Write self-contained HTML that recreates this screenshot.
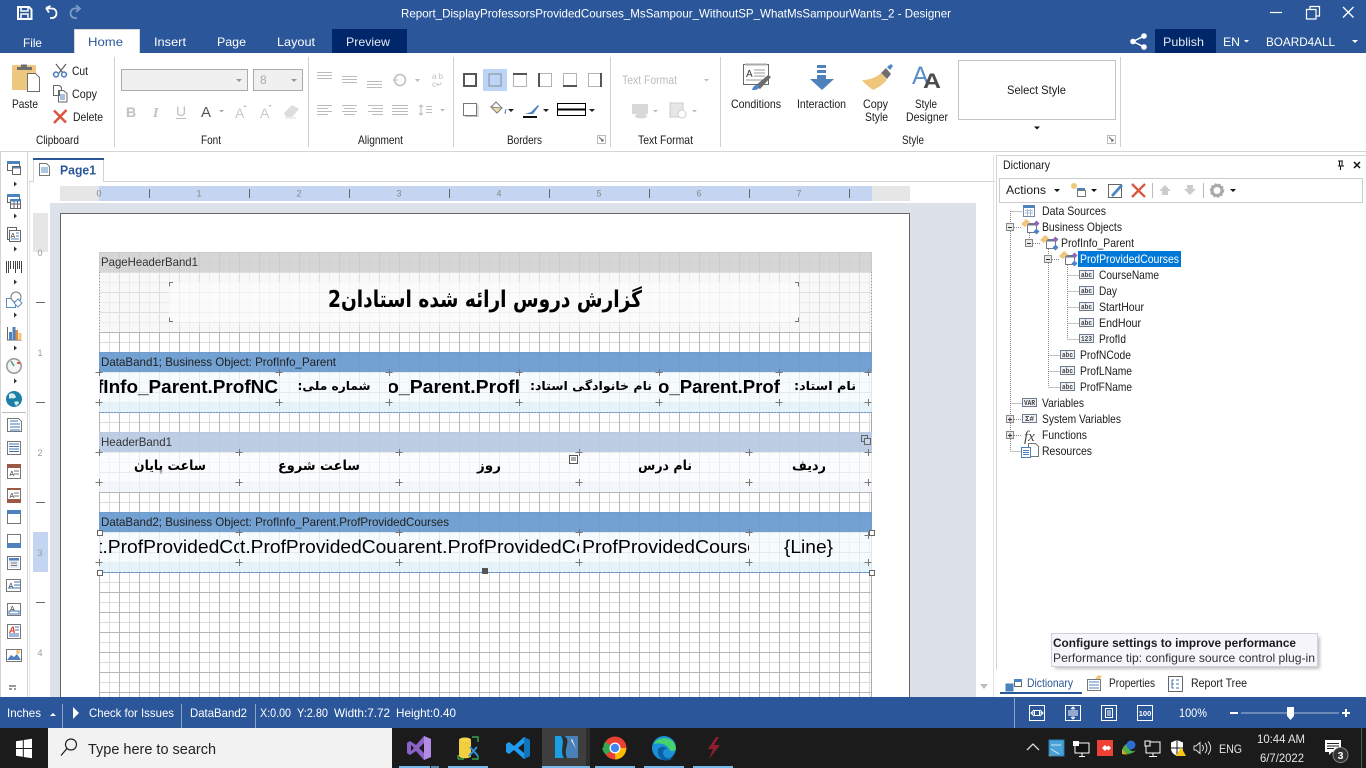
<!DOCTYPE html>
<html lang="en"><head><meta charset="utf-8"><title>Designer</title>
<style>
html,body{margin:0;padding:0;width:1366px;height:768px;overflow:hidden;background:#fff}
svg{display:block;font-family:"Liberation Sans","DejaVu Sans",sans-serif;font-size:12px}
text{white-space:pre}
.k{fill:#222}
.w{fill:#fff}
.g{fill:#b5b5b5}
.ar{font-family:"DejaVu Sans","Liberation Sans",sans-serif;font-weight:bold;fill:#000;direction:rtl;text-anchor:middle}
.t{font-size:12px;fill:#1b1b1b}
.b{font-size:12px;fill:#333}
</style></head><body>
<svg xmlns="http://www.w3.org/2000/svg" width="1366" height="768" viewBox="0 0 1366 768">
<defs>
<pattern id="grid" x="99" y="252" width="20" height="20" patternUnits="userSpaceOnUse">
<rect width="20" height="20" fill="#fff"/>
<rect x="10" width="1" height="20" fill="#dcdcdc"/><rect y="10" width="20" height="1" fill="#dcdcdc"/>
<rect width="1" height="20" fill="#b6b6b6"/><rect width="20" height="1" fill="#b6b6b6"/>
</pattern>
<filter id="soft" x="-10%" y="-30%" width="120%" height="160%"><feGaussianBlur stdDeviation="1.500"/></filter>
<clipPath id="c1"><rect x="100" y="372" width="179" height="30"/></clipPath>
<clipPath id="c2"><rect x="389" y="372" width="131" height="30"/></clipPath>
<clipPath id="c3"><rect x="659" y="372" width="121" height="30"/></clipPath>
<clipPath id="d1"><rect x="100" y="532" width="139" height="30"/></clipPath>
<clipPath id="d2"><rect x="239" y="532" width="160" height="30"/></clipPath>
<clipPath id="d3"><rect x="399" y="532" width="180" height="30"/></clipPath>
<clipPath id="d4"><rect x="579" y="532" width="170" height="30"/></clipPath>
<g id="bo">
<rect x="6.500" y="4.500" width="9" height="9" fill="#fff" stroke="#6d7a8c"/>
<path d="M6 5.500h10" stroke="#6d7a8c" stroke-width="2"/>
<path d="M0 5 5 0l4 3-5 5z" fill="#efc77c"/>
<path d="M12.500 4.500l3-3 3 3-3 3z" fill="#9166b8"/>
<path d="M12.500 12.500l3-3 3 3-3 3z" fill="#4c86c6"/>
</g>
<g id="corner" fill="none" stroke="#777"><path d="M-3.500 .5h7M.5-3v7"/></g>
</defs>

<!-- title bar -->
<rect width="1366" height="53" fill="#2b579a"/>
<g fill="none" stroke="#fff" stroke-width="2">
<path d="M18 7h11l2.500 2.500V19H18z"/><path d="M21 7v4h7V7M21 19v-5h7v5" stroke-width="1.500"/>
<path d="M46 8 49 12.500M46 8l4.500-2M46.500 8.500H52c6 0 6 9.500 0 9.500h-2" stroke-width="1.800"/>
<g stroke="#7e9bc6" stroke-width="1.800"><path d="M80 8.500H75c-6 0-6 9.500 0 9.500h2M76 5.500l4 3-4 3.500"/></g>
<path d="M1270 12.500h12" stroke-width="1.200"/>
<path d="M1306.500 9.500h9.500v9.500h-9.500z" stroke-width="1.200"/>
<path d="M1310 9.500V6.500h9.500V16h-3" stroke-width="1.200"/>
<path d="M1343 7l10.500 10.500M1353.500 7 1343 17.500" stroke-width="1.300"/>
</g>
<text x="401" y="17.500" class="w" textLength="550" lengthAdjust="spacingAndGlyphs">Report_DisplayProfessorsProvidedCourses_MsSampour_WithoutSP_WhatMsSampourWants_2 - Designer</text>

<!-- tabs -->
<rect x="74" y="29" width="66" height="25" fill="#fff"/><path d="M74.500 53V29.500h65V53" fill="none" stroke="#d8d8d8"/>
<rect x="332" y="29" width="75" height="24" fill="#01276b"/>
<rect x="1155" y="29" width="61" height="24" fill="#01276b"/>
<text x="23" y="47" class="w" textLength="19" lengthAdjust="spacingAndGlyphs">File</text>
<text x="88" y="46" fill="#2b579a" textLength="35" lengthAdjust="spacingAndGlyphs">Home</text>
<text x="154" y="46" class="w" textLength="32" lengthAdjust="spacingAndGlyphs">Insert</text>
<text x="217" y="46" class="w" textLength="29" lengthAdjust="spacingAndGlyphs">Page</text>
<text x="277" y="46" class="w" textLength="38" lengthAdjust="spacingAndGlyphs">Layout</text>
<text x="346" y="46" fill="#e4e9f2" textLength="44" lengthAdjust="spacingAndGlyphs">Preview</text>
<text x="1163" y="46" fill="#e4e9f2" textLength="41" lengthAdjust="spacingAndGlyphs">Publish</text>
<text x="1223" y="46" class="w" textLength="17" lengthAdjust="spacingAndGlyphs">EN</text>
<text x="1266" y="46" class="w" textLength="69" lengthAdjust="spacingAndGlyphs">BOARD4ALL</text>
<path d="M1244 40h5l-2.500 2.500zM1352 40h6l-3 3z" fill="#fff"/>
<g fill="#fff"><circle cx="1133" cy="41.500" r="2.800"/><circle cx="1144" cy="36" r="2.800"/><circle cx="1144" cy="47" r="2.800"/><path d="M1133 41.500 1144 36M1133 41.500 1144 47" stroke="#fff" stroke-width="1.500"/></g>

<!-- ribbon -->
<rect y="53" width="1366" height="98" fill="#fff"/>
<rect y="151" width="1366" height="1" fill="#d4d4d4"/>
<g fill="#d0d0d0"><rect x="114" y="57" width="1" height="90"/><rect x="308" y="57" width="1" height="90"/><rect x="453" y="57" width="1" height="90"/><rect x="610" y="57" width="1" height="90"/><rect x="720" y="57" width="1" height="90"/><rect x="1120" y="57" width="1" height="90"/></g>

<!-- clipboard -->
<rect x="12" y="65" width="24" height="25" rx="1" fill="#eec77f"/>
<path d="M17 70v-3h4v-2.500h6V67h5v3z" fill="#6e6e6e"/>
<path d="M27.500 73.500h8l4 4v14h-12z" fill="#fff" stroke="#6e6e6e"/>
<text x="12" y="108" class="t" textLength="26" lengthAdjust="spacingAndGlyphs">Paste</text>
<g fill="none"><path d="M56 64l7 9M66 64l-7 9" stroke="#666" stroke-width="1.300"/><circle cx="56" cy="74.500" r="2.400" stroke="#4c82bd" stroke-width="1.600"/><circle cx="64" cy="74.500" r="2.400" stroke="#4c82bd" stroke-width="1.600"/></g>
<text x="72" y="75" class="t" textLength="16" lengthAdjust="spacingAndGlyphs">Cut</text>
<path d="M53.500 85.500h6l2 2v3h-2l0 5h-6zM58.500 90.500h5l3.500 3v8.500h-8.500z" fill="#fff" stroke="#666"/><path d="M60 95h5M60 97h5M60 99h5" stroke="#4c82bd"/>
<text x="72" y="98" class="t" textLength="25" lengthAdjust="spacingAndGlyphs">Copy</text>
<path d="M54 110.500 66 122.500M66.500 110 54 123" stroke="#d9573f" stroke-width="2.500" fill="none"/>
<text x="73" y="121" class="t" textLength="30" lengthAdjust="spacingAndGlyphs">Delete</text>
<text x="36" y="144" class="t" textLength="43" lengthAdjust="spacingAndGlyphs">Clipboard</text>

<!-- font -->
<rect x="121.500" y="69.500" width="126" height="21" fill="#f0f0f0" stroke="#ababab"/>
<rect x="253.500" y="69.500" width="49" height="21" fill="#f0f0f0" stroke="#ababab"/>
<path d="M236 79h6l-3 3zM291 79h6l-3 3z" fill="#999"/>
<text x="260" y="84" fill="#aaa" font-size="12">8</text>
<text x="126" y="117" font-weight="bold" font-size="14" fill="#c0c0c0">B</text>
<text x="153" y="117" font-style="italic" font-weight="bold" font-family="Liberation Serif" font-size="14" fill="#c0c0c0">I</text>
<text x="176" y="116" font-size="14" fill="#c0c0c0">U</text><rect x="176" y="118" width="10" height="1" fill="#c0c0c0"/>
<text x="201" y="117" font-size="15" fill="#555">A</text><path d="M219 110h5l-2.500 2.500z" fill="#aaa"/>
<text x="235" y="118" font-size="14" fill="#c8c8c8">A</text><path d="M243 107l2-2 2 2z" fill="#c8c8c8"/>
<text x="260" y="118" font-size="14" fill="#c8c8c8">A</text><path d="M268 105h4l-2 2z" fill="#c8c8c8"/>
<path d="M284 113l8-8 7 4-7 8h-6z" fill="#ddd"/><path d="M285 118h11" stroke="#ddd"/>
<text x="201" y="144" class="t" textLength="20" lengthAdjust="spacingAndGlyphs">Font</text>

<!-- alignment -->
<g stroke="#bdbdbd" fill="none">
<path d="M317 72.500h15M317 75.500h15M317 78.500h15"/>
<path d="M342 76.500h15M342 79.500h15M342 82.500h15"/>
<path d="M367 81.500h15M367 84.500h15M367 87.500h15"/>
<circle cx="400" cy="80" r="5.500" stroke-width="1.500"/><path d="M393 80h5"/><path d="M415 79h5l-2.500 3z" fill="#bbb" stroke="none"/>
<path d="M317 105.500h15M317 108.500h11M317 111.500h15M317 114.500h11"/>
<path d="M342 105.500h15M344 108.500h11M342 111.500h15M344 114.500h11"/>
<path d="M368 105.500h15M372 108.500h11M368 111.500h15M372 114.500h11"/>
<path d="M392 105.500h16M392 108.500h16M392 111.500h16M392 114.500h16"/>
<path d="M421 105v10M419 107l2-2 2 2M419 113l2 2 2-2M426 106.500h6M426 109.500h6M426 112.500h6"/>
</g>
<path d="M440 109h5l-2.500 2.500z" fill="#bbb"/>
<text x="432" y="79" font-size="8" fill="#c0c0c0">a b</text><text x="432" y="87" font-size="8" fill="#c0c0c0">c↵</text>
<text x="358" y="144" class="t" textLength="45" lengthAdjust="spacingAndGlyphs">Alignment</text>

<!-- borders -->
<rect x="483" y="69" width="24" height="22" fill="#bcd4f7"/>
<g fill="none" stroke="#b3b3b3">
<rect x="464" y="74" width="12" height="12" stroke="#555" stroke-width="2"/>
<rect x="489" y="74" width="12" height="12" stroke="#8c8c8c" stroke-width="1"/>
<rect x="513.500" y="73.500" width="13" height="13"/><path d="M513 74h14" stroke="#555" stroke-width="2"/>
<rect x="538.500" y="73.500" width="13" height="13"/><path d="M539 73v14" stroke="#555" stroke-width="2"/>
<rect x="563.500" y="73.500" width="13" height="13"/><path d="M563 86h14" stroke="#555" stroke-width="2"/>
<rect x="588.500" y="73.500" width="13" height="13"/><path d="M601 73v14" stroke="#555" stroke-width="2"/>
<rect x="463.500" y="103.500" width="13" height="12" stroke="#777"/><path d="M465 116.500h13v-12" stroke="#bbb"/>
<path d="M491 107l5-5 6 6-5 5z" stroke="#777"/><path d="M491 107l11 1-5 5z" fill="#f0d9a5" stroke="#888"/>
<path d="M506 109l-1 4 1 0" stroke="#4c82bd"/>
</g>
<path d="M508 109h6l-3 3zM543 109h6l-3 3zM589 109h6l-3 3z" fill="#222"/>
<path d="M525 114l6-2 7-7 1 1-6 8z" fill="#4c82bd"/><rect x="523" y="116" width="14" height="2" fill="#111"/>
<rect x="557.500" y="103.500" width="28" height="12" fill="#fff" stroke="#000"/><rect x="558" y="108.500" width="28" height="2" fill="#000"/>
<text x="507" y="144" class="t" textLength="35" lengthAdjust="spacingAndGlyphs">Borders</text>
<path d="M597.500 143.500v-8h8v8z" fill="none" stroke="#bbb"/><path d="M599 137l4 4M603 139v2h-2" stroke="#666" fill="none"/>

<!-- text format -->
<text x="622" y="84" fill="#bdbdbd" textLength="55" lengthAdjust="spacingAndGlyphs">Text Format</text>
<path d="M704 79h5l-2.500 2.500zM653 110h5l-2.500 2.500zM692 110h5l-2.500 2.500z" fill="#bbb"/>
<rect x="632" y="104" width="16" height="10" fill="#d8d8d8"/><ellipse cx="641" cy="116" rx="6" ry="2.500" fill="#d8d8d8"/>
<rect x="670" y="103" width="13" height="14" fill="#e6e6e6" stroke="#ccc"/><circle cx="682" cy="114" r="4" fill="#fff" stroke="#ccc"/>
<text x="638" y="144" class="t" textLength="55" lengthAdjust="spacingAndGlyphs">Text Format</text>

<!-- style group -->
<rect x="743.500" y="64.500" width="25" height="20" fill="#fff" stroke="#666"/><rect x="745" y="63.500" width="22" height="2" fill="#aaa"/>
<text x="746" y="77" font-size="10" fill="#333">A</text><path d="M754 70h11M754 73h11M754 76h11M746 80h18" stroke="#999"/>
<path d="M755 86l13-11 3 2-11 12z" fill="#6b6b6b"/><path d="M752 90c1-4 4-6 7-5l0 3-3 2z" fill="#4c86c6"/>
<text x="731" y="108" class="t" textLength="50" lengthAdjust="spacingAndGlyphs">Conditions</text>
<path d="M817 65h9v3h-9zM817 70h9v3h-9zM817 75h9v4h8l-12 11-12-11h7z" fill="#4d82bc"/>
<text x="797" y="108" class="t" textLength="49" lengthAdjust="spacingAndGlyphs">Interaction</text>
<path d="M862 80c8 0 15-3 19-7l6 7c-5 5-9 8-14 10-4-3-8-6-11-10z" fill="#efc77c"/>
<path d="M881 73l5-5 5 6-4 5z" fill="#6e6e6e"/><path d="M887 67l4-3 2 2-3 4z" fill="#4c86c6"/>
<text x="863" y="108" class="t" textLength="25" lengthAdjust="spacingAndGlyphs">Copy</text>
<text x="865" y="121" class="t" textLength="23" lengthAdjust="spacingAndGlyphs">Style</text>
<text x="912" y="84" font-size="25" fill="#5b8fc6">A</text><text x="923" y="88" font-size="21" font-weight="bold" fill="#4c4c4c" textLength="18" lengthAdjust="spacingAndGlyphs">A</text>
<text x="915" y="108" class="t" textLength="22" lengthAdjust="spacingAndGlyphs">Style</text>
<text x="906" y="121" class="t" textLength="42" lengthAdjust="spacingAndGlyphs">Designer</text>
<rect x="958.500" y="60.500" width="157" height="59" fill="#fff" stroke="#c4c4c4"/>
<text x="1007" y="94" class="t" textLength="59" lengthAdjust="spacingAndGlyphs">Select Style</text>
<path d="M1034 126.500h6l-3 3z" fill="#111"/>
<text x="902" y="144" class="t" textLength="22" lengthAdjust="spacingAndGlyphs">Style</text>
<path d="M1107.500 143.500v-8h8v8z" fill="none" stroke="#bbb"/><path d="M1109 137l4 4M1113 139v2h-2" stroke="#666" fill="none"/>

<!-- left toolbar -->
<rect x="0" y="152" width="1" height="546" fill="#d4d4d4"/><rect x="27" y="152" width="1" height="546" fill="#d4d4d4"/>
<rect x="2" y="412" width="24" height="1" fill="#bbb"/>
<g fill="#333"><path d="M14 181.500l3 2.500-3 2.500zM14 213.500l3 2.500-3 2.500zM14 246.500l3 2.500-3 2.500zM14 279.500l3 2.500-3 2.500zM14 312.500l3 2.500-3 2.500zM14 345.500l3 2.500-3 2.500zM14 378.500l3 2.500-3 2.500z"/></g>
<!-- 1 windows -->
<rect x="7.500" y="161.500" width="12" height="9" fill="#fff" stroke="#666"/><rect x="7" y="161" width="13" height="3" fill="#4c82bd"/>
<rect x="12.500" y="166.500" width="8" height="8" fill="#fff" stroke="#666"/><rect x="12" y="166" width="9" height="2.500" fill="#4c82bd"/><rect x="12.500" y="166.500" width="8" height="8" fill="none" stroke="#666"/>
<!-- 2 table -->
<rect x="7.500" y="194.500" width="12" height="8" fill="#fff" stroke="#666"/><rect x="7" y="194" width="13" height="3" fill="#4c82bd"/>
<rect x="10.500" y="199.500" width="10" height="9" fill="#fff" stroke="#666"/><path d="M10 204h11M14 199v10M17.500 199v10" stroke="#666"/><rect x="10" y="199" width="11" height="2.500" fill="#4c82bd"/>
<!-- 3 text -->
<rect x="7.500" y="227.500" width="9" height="12" fill="#fff" stroke="#666"/><rect x="9.500" y="230.500" width="11" height="11" fill="#fff" stroke="#666"/><path d="M16 233h3M16 236h3M11 239h8" stroke="#4c82bd"/><text x="10.500" y="238" font-size="7" fill="#333">A</text>
<!-- 4 barcode -->
<path d="M6.500 261v12M8.500 261v12M10.500 261v8M13.500 261v8M15.500 261v12M17.500 261v8M19.500 261v8M21.500 261v12" stroke="#444" stroke-width="1"/>
<!-- 5 shapes -->
<path d="M6.500 298.500h9v9h-9z" fill="#fff" stroke="#5a8fc6"/><circle cx="16" cy="297" r="5" fill="#fff" stroke="#777"/><path d="M14 303l4-4 4 4-4 4z" fill="#fff" stroke="#5a8fc6"/>
<!-- 6 chart -->
<path d="M7.500 327v13h14" fill="none" stroke="#666"/><rect x="9" y="332" width="3" height="8" fill="#4c82bd"/><rect x="12.500" y="327" width="3" height="13" fill="#4c82bd"/><rect x="15.500" y="330" width="2.500" height="10" fill="#e58a3c"/><rect x="18.500" y="333" width="3" height="7" fill="#efc77c"/>
<!-- 7 gauge -->
<circle cx="14" cy="366" r="7.200" fill="#f4f4f4" stroke="#999" stroke-width="1.500"/><path d="M14 366l-3-5" stroke="#4c9a8c" stroke-width="1.500"/><path d="M17 363l3 0" stroke="#d9573f" stroke-width="2"/>
<!-- 8 globe -->
<circle cx="14" cy="399" r="8" fill="#1b7fa8"/><path d="M9 394c4-2 6 0 7 3-2 3-4 0-7 2zM14 402c3-1 5-1 5 1l-3 3z" fill="#d5ece9"/>
<!-- second set -->
<g fill="none" stroke="#777">
<path d="M7.500 418.500h11l3 3v10h-14z" fill="#fff"/><path d="M10 421h8M10 424h10M10 427h10M10 430h10" stroke="#3f76b5"/>
<rect x="7.500" y="441.500" width="13" height="13" fill="#fff"/><path d="M9 444h10M9 446.500h10M9 449h10M9 451.500h10" stroke="#3f76b5"/>
<rect x="7.500" y="465.500" width="13" height="13" fill="#fff"/>
<rect x="7.500" y="489.500" width="13" height="13" fill="#fff"/>
<rect x="7.500" y="510.500" width="13" height="13" fill="#fff"/>
<rect x="7.500" y="534.500" width="13" height="13" fill="#fff"/>
<rect x="7.500" y="556.500" width="13" height="13" fill="#fff"/>
<rect x="6.500" y="579.500" width="14" height="12" fill="#fff"/>
<rect x="7.500" y="603.500" width="13" height="12" fill="#fff"/>
<rect x="7.500" y="624.500" width="13" height="14" fill="#fff"/>
<rect x="6.500" y="649.500" width="15" height="12" fill="#fff"/>
</g>
<rect x="7" y="464" width="14" height="4" fill="#9c5a46"/><text x="9.500" y="476" font-size="7" fill="#333">A</text><path d="M14 471h5M14 474h5" stroke="#777"/>
<rect x="7" y="499" width="14" height="4" fill="#9c5a46"/><rect x="7" y="488" width="14" height="2" fill="#9c5a46"/><text x="9.500" y="498" font-size="7" fill="#333">A</text><path d="M14 493h5M14 496h5" stroke="#777"/>
<rect x="7" y="510" width="14" height="4" fill="#4f81bd"/>
<rect x="7" y="543" width="14" height="5" fill="#4f81bd"/>
<rect x="9" y="558" width="10" height="10" fill="#e4ebf3"/><rect x="9" y="558" width="10" height="2.500" fill="#4f81bd"/><path d="M11 563h6M11 565.500h6" stroke="#777"/>
<text x="8.500" y="588" font-size="7" fill="#333">A</text><path d="M14 582h6M14 585h6M8 588h12" stroke="#3f76b5"/>
<text x="10" y="611" font-size="7" fill="#333">A</text><rect x="9" y="611" width="10" height="3" fill="none" stroke="#3f76b5"/>
<text x="9" y="633" font-size="9" font-style="italic" font-weight="bold" fill="#d9432a">A</text><path d="M15 627h4M15 630h4M9 634h10M9 636h10" stroke="#3f76b5"/>
<path d="M7 660l4-5 3 2 3-3 4 6z" fill="#4f81bd"/><circle cx="18" cy="652" r="2" fill="#efc77c"/>
<path d="M9 686h7M9 689h3M14 689h2" stroke="#333"/>

<!-- page tab -->
<rect x="29" y="181" width="966" height="1" fill="#d4d4d4"/>
<rect x="33" y="158" width="71" height="24" fill="#fff"/><path d="M33.500 182v-23M103.500 182v-23" stroke="#d4d4d4"/>
<rect x="33" y="158" width="71" height="2" fill="#2b579a"/>
<path d="M39.500 163.500h7l3 3v9h-10z" fill="#fff" stroke="#777"/><path d="M41 168h7M41 170h7M41 172h7" stroke="#5b8fc6"/>
<text x="60" y="174.500" font-weight="bold" font-size="13" fill="#2b579a" textLength="36" lengthAdjust="spacingAndGlyphs">Page1</text>

<!-- canvas -->
<rect x="29" y="182" width="966" height="516" fill="#fff"/>
<rect x="29" y="182" width="1" height="516" fill="#e4e4e4"/><rect x="993" y="155" width="1" height="543" fill="#e4e4e4"/>
<rect x="50" y="203" width="926" height="495" fill="#dce1ea"/>
<path d="M980 684h8l-4 5z" fill="#bbb"/>
<!-- rulers -->
<rect x="60" y="186" width="850" height="15" fill="#e6e6e6"/><rect x="99" y="186" width="773" height="15" fill="#c3d5f0"/>
<g fill="#888" font-size="9" text-anchor="middle">
<text x="99" y="196.500">0</text><text x="199" y="196.500">1</text><text x="299" y="196.500">2</text><text x="399" y="196.500">3</text><text x="499" y="196.500">4</text><text x="599" y="196.500">5</text><text x="699" y="196.500">6</text><text x="799" y="196.500">7</text>
</g>
<g fill="#666"><rect x="149" y="189" width="1" height="9"/><rect x="249" y="189" width="1" height="9"/><rect x="349" y="189" width="1" height="9"/><rect x="449" y="189" width="1" height="9"/><rect x="549" y="189" width="1" height="9"/><rect x="649" y="189" width="1" height="9"/><rect x="749" y="189" width="1" height="9"/><rect x="849" y="189" width="1" height="9"/></g>
<rect x="33" y="213" width="15" height="485" fill="#fff"/><rect x="33" y="213" width="15" height="39" fill="#e6e6e6"/><rect x="33" y="532" width="15" height="40" fill="#c3d5f0"/>
<g fill="#999" font-size="9" text-anchor="middle"><text x="40" y="256">0</text><text x="40" y="356">1</text><text x="40" y="456">2</text><text x="40" y="556">3</text><text x="40" y="656">4</text></g>
<g fill="#666"><rect x="36" y="302" width="9" height="1"/><rect x="36" y="402" width="9" height="1"/><rect x="36" y="502" width="9" height="1"/><rect x="36" y="602" width="9" height="1"/></g>
<!-- page -->
<rect x="60.500" y="213.500" width="849" height="500" fill="#fff" stroke="#666"/>
<rect x="99" y="252" width="773" height="446" fill="url(#grid)"/>
<rect x="871" y="252" width="1" height="446" fill="#aaa"/>

<!-- page header -->
<rect x="99" y="252" width="773" height="20" fill="#cfcfcf" fill-opacity=".85"/>
<rect x="99" y="272" width="773" height="60" fill="#f5f5f5" fill-opacity=".65"/>
<rect x="169" y="282" width="630" height="40" fill="#fdfdfd" fill-opacity=".6"/>
<path d="M99.500 272v60M871.500 272v60" stroke="#999" stroke-dasharray="1 2"/>
<text x="101" y="266" fill="#333" textLength="97" lengthAdjust="spacingAndGlyphs">PageHeaderBand1</text>
<text x="485" y="307" class="ar" font-size="23" textLength="314" lengthAdjust="spacingAndGlyphs">گزارش دروس ارائه شده استادان2</text>
<g fill="none" stroke="#777"><path d="M173 282.500h-3.500v4M795 282.500h3.500v4M173 321.500h-3.500v-4M795 321.500h3.500v-4"/></g>

<!-- data band 1 -->
<rect x="99" y="352" width="773" height="20" fill="#6a9cd0" fill-opacity=".95"/>
<rect x="99" y="372" width="773" height="30" fill="#f3f9fe" fill-opacity=".75"/>
<rect x="99" y="402" width="773" height="10" fill="#e2f1f9" fill-opacity=".85"/>
<path d="M99 412.500h773" stroke="#6a9cd0" stroke-dasharray="2 1"/>
<text x="101" y="366" fill="#222" textLength="235" lengthAdjust="spacingAndGlyphs">DataBand1; Business Object: ProfInfo_Parent</text>
<g clip-path="url(#c1)"><text x="97" y="393" font-weight="bold" font-size="18" fill="#000" textLength="181" lengthAdjust="spacingAndGlyphs">fInfo_Parent.ProfNC</text></g>
<g clip-path="url(#c2)"><text x="387" y="393" font-weight="bold" font-size="18" fill="#000" textLength="133" lengthAdjust="spacingAndGlyphs">o_Parent.Profl</text></g>
<g clip-path="url(#c3)"><text x="658" y="393" font-weight="bold" font-size="18" fill="#000" textLength="122" lengthAdjust="spacingAndGlyphs">o_Parent.Prof</text></g>
<text x="334" y="390" class="ar" font-size="12" textLength="73" lengthAdjust="spacingAndGlyphs">شماره ملی:</text>
<text x="591" y="390" class="ar" font-size="12" textLength="122" lengthAdjust="spacingAndGlyphs">نام خانوادگی استاد:</text>
<text x="825" y="390" class="ar" font-size="12" textLength="62" lengthAdjust="spacingAndGlyphs">نام استاد:</text>
<use href="#corner" x="99" y="372"/><use href="#corner" x="279" y="372"/><use href="#corner" x="389" y="372"/><use href="#corner" x="519" y="372"/><use href="#corner" x="659" y="372"/><use href="#corner" x="779" y="372"/><use href="#corner" x="868" y="372"/>
<use href="#corner" x="99" y="402"/><use href="#corner" x="279" y="402"/><use href="#corner" x="389" y="402"/><use href="#corner" x="519" y="402"/><use href="#corner" x="659" y="402"/><use href="#corner" x="779" y="402"/><use href="#corner" x="868" y="402"/>

<!-- header band -->
<rect x="99" y="432" width="773" height="20" fill="#b8cae3" fill-opacity=".95"/>
<rect x="99" y="452" width="773" height="30" fill="#f9fbfd" fill-opacity=".75"/>
<rect x="99" y="482" width="773" height="10" fill="#f1f5fa" fill-opacity=".85"/>
<text x="101" y="446" fill="#333" textLength="71" lengthAdjust="spacingAndGlyphs">HeaderBand1</text>
<text x="170" y="470" class="ar" font-size="13.500" textLength="72" lengthAdjust="spacingAndGlyphs">ساعت پایان</text>
<text x="319" y="470" class="ar" font-size="13.500" textLength="82" lengthAdjust="spacingAndGlyphs">ساعت شروع</text>
<text x="489" y="470" class="ar" font-size="13.500" textLength="24" lengthAdjust="spacingAndGlyphs">روز</text>
<text x="665" y="470" class="ar" font-size="13.500" textLength="54" lengthAdjust="spacingAndGlyphs">نام درس</text>
<text x="809" y="470" class="ar" font-size="13.500" textLength="34" lengthAdjust="spacingAndGlyphs">ردیف</text>
<use href="#corner" x="99" y="452"/><use href="#corner" x="239" y="452"/><use href="#corner" x="399" y="452"/><use href="#corner" x="579" y="452"/><use href="#corner" x="749" y="452"/><use href="#corner" x="868" y="452"/>
<use href="#corner" x="99" y="482"/><use href="#corner" x="239" y="482"/><use href="#corner" x="399" y="482"/><use href="#corner" x="579" y="482"/><use href="#corner" x="749" y="482"/><use href="#corner" x="868" y="482"/>
<rect x="569.500" y="455.500" width="8" height="8" fill="#fff" stroke="#555"/><path d="M571 458h5M571 460h5" stroke="#555"/>
<rect x="861.500" y="435.500" width="6" height="6" fill="none" stroke="#666"/><rect x="864.500" y="438.500" width="6" height="6" fill="#c8d6ea" stroke="#666"/>

<!-- data band 2 -->
<rect x="99" y="512" width="773" height="20" fill="#6a9cd0" fill-opacity=".95"/>
<rect x="99" y="532" width="773" height="30" fill="#f3f9fe" fill-opacity=".75"/>
<rect x="99" y="562" width="773" height="10" fill="#e2f1f9" fill-opacity=".85"/>
<path d="M99 572.500h773" stroke="#5a92cf" stroke-dasharray="3 1"/>
<text x="101" y="526" fill="#222" textLength="348" lengthAdjust="spacingAndGlyphs">DataBand2; Business Object: ProfInfo_Parent.ProfProvidedCourses</text>
<g font-size="18" fill="#000">
<g clip-path="url(#d1)"><text x="97" y="553" textLength="147" lengthAdjust="spacingAndGlyphs">t.ProfProvidedCo</text></g>
<g clip-path="url(#d2)"><text x="240" y="553" textLength="157" lengthAdjust="spacingAndGlyphs">t.ProfProvidedCou</text></g>
<g clip-path="url(#d3)"><text x="397" y="553" textLength="190" lengthAdjust="spacingAndGlyphs">arent.ProfProvidedCo</text></g>
<g clip-path="url(#d4)"><text x="582" y="553" textLength="176" lengthAdjust="spacingAndGlyphs">ProfProvidedCourse</text></g>
<text x="784" y="553" textLength="49" lengthAdjust="spacingAndGlyphs">{Line}</text>
</g>
<use href="#corner" x="239" y="532"/><use href="#corner" x="399" y="532"/><use href="#corner" x="579" y="532"/><use href="#corner" x="749" y="532"/><use href="#corner" x="868" y="535"/>
<use href="#corner" x="239" y="562"/><use href="#corner" x="399" y="562"/><use href="#corner" x="579" y="562"/><use href="#corner" x="749" y="562"/><use href="#corner" x="99" y="562"/><use href="#corner" x="868" y="562"/>
<g fill="#fff" stroke="#666"><rect x="97.500" y="530.500" width="5" height="5"/><rect x="869.500" y="530.500" width="5" height="5"/><rect x="97.500" y="570.500" width="5" height="5"/><rect x="869.500" y="570.500" width="5" height="5"/></g>
<rect x="482" y="568" width="6" height="6" fill="#555"/>

<!-- right panel -->
<rect x="996" y="155" width="370" height="543" fill="#fff"/>
<path d="M996.500 155v515M996 155.500h370" stroke="#d4d4d4" fill="none"/>
<text x="1003" y="169" class="t" textLength="47" lengthAdjust="spacingAndGlyphs">Dictionary</text>
<path d="M1338 161h5M1339.500 161v5h2.500v-5M1338 166h6M1340.500 166v4" stroke="#111" fill="none"/>
<path d="M1354 162l6 6M1360 162l-6 6" stroke="#111" stroke-width="1.500"/>
<rect x="999.500" y="178.500" width="363" height="24" fill="#fff" stroke="#ccc"/>
<text x="1006" y="194" class="t" textLength="40" lengthAdjust="spacingAndGlyphs">Actions</text>
<path d="M1054 189h6l-3 3zM1091 189h6l-3 3zM1230 189h6l-3 3z" fill="#111"/>
<circle cx="1074" cy="186" r="3" fill="#efc77c"/><rect x="1077" y="188" width="8" height="3" fill="#4c82bd"/><rect x="1077.500" y="190.500" width="8" height="6" fill="#fff" stroke="#777"/>
<rect x="1108.500" y="184.500" width="13" height="13" fill="#fff" stroke="#666"/><path d="M1111 195l10-11 2 2-10 11z" fill="#4c86c6"/>
<path d="M1132 184l13 13M1145 184l-13 13" stroke="#d9573f" stroke-width="2.300"/>
<rect x="1152" y="183" width="1" height="15" fill="#bbb"/><rect x="1203" y="183" width="1" height="15" fill="#bbb"/>
<path d="M1165 185l6 6h-3v4h-6v-4h-3z" fill="#ccc"/><path d="M1190 195l6-6h-3v-4h-6v4h-3z" fill="#ccc"/>
<circle cx="1217" cy="190.500" r="5" fill="none" stroke="#aaa" stroke-width="3"/><circle cx="1217" cy="190.500" r="6.500" fill="none" stroke="#aaa" stroke-width="1.500" stroke-dasharray="2 2"/>

<!-- tree lines -->
<g fill="none" stroke="#888" stroke-dasharray="1 1">
<path d="M1010.500 211v240M1010.500 211.500h11M1014 227.500h7M1010.500 403.500h11M1014 419.500h8M1014 435.500h8M1010.500 451.500h11"/>
<path d="M1029.500 227v16M1033 243.500h7"/>
<path d="M1048.500 243v144M1052 259.500h7M1048.500 355.500h11M1048.500 371.500h11M1048.500 387.500h11"/>
<path d="M1067.500 259v80M1067.500 275.500h11M1067.500 291.500h11M1067.500 307.500h11M1067.500 323.500h11M1067.500 339.500h11"/>
</g>
<g fill="#e8e8e8" stroke="#888"><rect x="1006.500" y="223.500" width="7" height="7"/><rect x="1025.500" y="239.500" width="7" height="7"/><rect x="1044.500" y="255.500" width="7" height="7"/><rect x="1006.500" y="415.500" width="7" height="7"/><rect x="1006.500" y="431.500" width="7" height="7"/></g>
<g stroke="#333"><path d="M1008 227.500h4M1027 243.500h4M1046 259.500h4M1008 419.500h4M1008 435.500h4M1010 417.500v4M1010 433.500v4"/></g>
<!-- tree icons -->
<rect x="1023.500" y="205.500" width="11" height="11" fill="#fff" stroke="#7a8aa0"/><rect x="1023" y="205" width="12" height="3" fill="#4f81bd"/><path d="M1025 210.500h8M1025 213h8M1027.500 209v7M1030.500 209v7" stroke="#a6bcd8"/>
<use href="#bo" x="1021" y="219"/><use href="#bo" x="1040" y="235"/><use href="#bo" x="1059" y="251"/>

<g fill="#eef1f5" stroke="#6f7c90">
<rect x="1079.500" y="270.500" width="14" height="8"/><rect x="1079.500" y="286.500" width="14" height="8"/><rect x="1079.500" y="302.500" width="14" height="8"/><rect x="1079.500" y="318.500" width="14" height="8"/><rect x="1079.500" y="334.500" width="14" height="8"/>
<rect x="1060.500" y="350.500" width="14" height="8"/><rect x="1060.500" y="366.500" width="14" height="8"/><rect x="1060.500" y="382.500" width="14" height="8"/>
<rect x="1022.500" y="398.500" width="14" height="8"/><rect x="1022.500" y="414.500" width="14" height="8"/>
</g>
<g font-family="Liberation Mono" font-size="7" font-weight="bold" fill="#444">
<text x="1081" y="277" textLength="11" lengthAdjust="spacingAndGlyphs">abc</text><text x="1081" y="293" textLength="11" lengthAdjust="spacingAndGlyphs">abc</text><text x="1081" y="309" textLength="11" lengthAdjust="spacingAndGlyphs">abc</text><text x="1081" y="325" textLength="11" lengthAdjust="spacingAndGlyphs">abc</text><text x="1081" y="341" textLength="11" lengthAdjust="spacingAndGlyphs">123</text>
<text x="1062" y="357" textLength="11" lengthAdjust="spacingAndGlyphs">abc</text><text x="1062" y="373" textLength="11" lengthAdjust="spacingAndGlyphs">abc</text><text x="1062" y="389" textLength="11" lengthAdjust="spacingAndGlyphs">abc</text>
<text x="1024" y="405" textLength="11" lengthAdjust="spacingAndGlyphs">VAR</text><text x="1025" y="421" textLength="9" lengthAdjust="spacingAndGlyphs">Σ#</text>
</g>
<text x="1024" y="441" font-family="Liberation Serif" font-style="italic" font-size="15" fill="#444">fx</text>
<path d="M1028.500 443.500h7l3 3v10h-10z" fill="#fff" stroke="#777"/><rect x="1021.500" y="447.500" width="9" height="10" fill="#fff" stroke="#4c82bd"/><path d="M1023 450.500h6M1023 452.500h6M1023 454.500h6" stroke="#4c82bd"/>

<rect x="1078" y="251" width="103" height="16" fill="#0078d7"/>
<text x="1042" y="215" class="t" textLength="64" lengthAdjust="spacingAndGlyphs">Data Sources</text>
<text x="1042" y="231" class="t" textLength="80" lengthAdjust="spacingAndGlyphs">Business Objects</text>
<text x="1061" y="247" class="t" textLength="73" lengthAdjust="spacingAndGlyphs">ProfInfo_Parent</text>
<text x="1080" y="263" class="w" textLength="99" lengthAdjust="spacingAndGlyphs">ProfProvidedCourses</text>
<text x="1099" y="279" class="t" textLength="60" lengthAdjust="spacingAndGlyphs">CourseName</text>
<text x="1099" y="295" class="t" textLength="18" lengthAdjust="spacingAndGlyphs">Day</text>
<text x="1099" y="311" class="t" textLength="45" lengthAdjust="spacingAndGlyphs">StartHour</text>
<text x="1099" y="327" class="t" textLength="42" lengthAdjust="spacingAndGlyphs">EndHour</text>
<text x="1099" y="343" class="t" textLength="27" lengthAdjust="spacingAndGlyphs">ProfId</text>
<text x="1080" y="359" class="t" textLength="51" lengthAdjust="spacingAndGlyphs">ProfNCode</text>
<text x="1080" y="375" class="t" textLength="52" lengthAdjust="spacingAndGlyphs">ProfLName</text>
<text x="1080" y="391" class="t" textLength="52" lengthAdjust="spacingAndGlyphs">ProfFName</text>
<text x="1042" y="407" class="t" textLength="42" lengthAdjust="spacingAndGlyphs">Variables</text>
<text x="1042" y="423" class="t" textLength="79" lengthAdjust="spacingAndGlyphs">System Variables</text>
<text x="1042" y="439" class="t" textLength="45" lengthAdjust="spacingAndGlyphs">Functions</text>
<text x="1042" y="455" class="t" textLength="50" lengthAdjust="spacingAndGlyphs">Resources</text>

<!-- tooltip -->
<rect x="1055" y="637" width="265" height="32" fill="#999" fill-opacity=".6" filter="url(#soft)"/>
<rect x="1051.500" y="633.500" width="266" height="33" fill="#f6f6fa" stroke="#cfcfe0"/>
<text x="1053" y="647" font-weight="bold" fill="#1b1b1b" textLength="243" lengthAdjust="spacingAndGlyphs">Configure settings to improve performance</text>
<text x="1053" y="662" fill="#333" textLength="262" lengthAdjust="spacingAndGlyphs">Performance tip: configure source control plug-in</text>

<!-- bottom tabs -->
<rect x="1000" y="692" width="82" height="2" fill="#2b579a"/>
<rect x="1005.500" y="683.500" width="8" height="8" fill="#4c82bd"/><rect x="1014.500" y="679.500" width="7" height="7" fill="#fff" stroke="#666"/><rect x="1014" y="679" width="8" height="3" fill="#4c82bd"/>
<text x="1027" y="687" fill="#2b579a" textLength="46" lengthAdjust="spacingAndGlyphs">Dictionary</text>
<rect x="1087.500" y="679.500" width="13" height="11" fill="#fff" stroke="#777"/><path d="M1089 682h10M1089 685h10M1089 688h10" stroke="#4c82bd"/><path d="M1095 679l3-4 4 1-2 3z" fill="#efc77c"/>
<text x="1109" y="687" class="t" textLength="46" lengthAdjust="spacingAndGlyphs">Properties</text>
<rect x="1168.500" y="676.500" width="14" height="15" fill="#fff" stroke="#666"/><path d="M1172 680v8M1172 680h2M1172 684h2M1172 688h2M1176 680h3M1176 684h3M1176 688h3" stroke="#3f76b5"/>
<text x="1191" y="687" class="t" textLength="56" lengthAdjust="spacingAndGlyphs">Report Tree</text>

<!-- status bar -->
<rect y="697" width="1366" height="31" fill="#2b579a"/>
<text x="7" y="717" class="w" textLength="34" lengthAdjust="spacingAndGlyphs">Inches</text>
<path d="M50 716l3-3 3 3z" fill="#fff"/>
<rect x="62" y="704" width="1" height="24" fill="#8ba5c9"/>
<path d="M73 707l6 6-6 6z" fill="#fff"/>
<text x="89" y="717" class="w" textLength="85" lengthAdjust="spacingAndGlyphs">Check for Issues</text>
<rect x="181" y="704" width="1" height="24" fill="#8ba5c9"/>
<text x="190" y="717" class="w" textLength="57" lengthAdjust="spacingAndGlyphs">DataBand2</text>
<rect x="255" y="704" width="1" height="24" fill="#8ba5c9"/>
<text x="260" y="717" class="w" textLength="31" lengthAdjust="spacingAndGlyphs">X:0.00</text>
<text x="297" y="717" class="w" textLength="31" lengthAdjust="spacingAndGlyphs">Y:2.80</text>
<text x="334" y="717" class="w" textLength="56" lengthAdjust="spacingAndGlyphs">Width:7.72</text>
<text x="396" y="717" class="w" textLength="60" lengthAdjust="spacingAndGlyphs">Height:0.40</text>
<rect x="1014" y="698" width="1" height="30" fill="#8ba5c9"/>
<g fill="none" stroke="#fff">
<rect x="1029.500" y="705.500" width="15" height="15"/><path d="M1031 713h12M1034 710l-3 3 3 3M1040 710l3 3-3 3"/><rect x="1034.500" y="710.500" width="5" height="5" fill="#2b579a"/>
<rect x="1065.500" y="705.500" width="15" height="15"/><path d="M1068 713h10M1073 707v3M1071 709l2-2 2 2M1073 719v-3M1071 717l2 2 2-2M1068 711h10M1068 715h10"/>
<rect x="1101.500" y="705.500" width="15" height="15"/><rect x="1105.500" y="708.500" width="7" height="9"/><path d="M1107 711h4M1107 713h4M1107 715h4"/>
<rect x="1137.500" y="705.500" width="15" height="15"/>
</g>
<text x="1145" y="716" class="w" font-size="7.500" font-weight="bold" text-anchor="middle">100</text>
<text x="1179" y="717" class="w" textLength="28" lengthAdjust="spacingAndGlyphs">100%</text>
<rect x="1230" y="712" width="8" height="2" fill="#fff"/>
<rect x="1241" y="712.500" width="98" height="1" fill="#a9bcd8"/>
<path d="M1287 707h7v9l-3.500 4-3.500-4z" fill="#fff"/>
<path d="M1342 713h8M1346 709v8" stroke="#fff" stroke-width="2"/>

<!-- taskbar -->
<rect y="728" width="1366" height="40" fill="#1b1b1b"/>
<g fill="#fff"><path d="M16 741.200l6.800-1v7.800H16zM23.800 740l8.200-1.200v9.200h-8.200zM16 749h6.800v7.800l-6.800-1zM23.800 749H32v9.200l-8.200-1.200z"/></g>
<rect x="48" y="728" width="344" height="40" fill="#f2f2f2"/>
<circle cx="71" cy="744.500" r="5.500" fill="none" stroke="#222" stroke-width="1.200"/><path d="M67 748.500l-6 7" stroke="#222" stroke-width="1.300"/>
<text x="88" y="754" font-size="15" fill="#222" textLength="128" lengthAdjust="spacingAndGlyphs">Type here to search</text>

<rect x="542" y="728" width="44" height="40" fill="#3e3e3e"/><rect x="586" y="728" width="4" height="40" fill="#2d2d2d"/>
<g fill="#76b9ed"><rect x="399" y="766" width="31" height="2"/><rect x="431" y="766" width="8" height="2" fill="#5a8fb8"/><rect x="448" y="766" width="40" height="2"/><rect x="542" y="766" width="48" height="2"/><rect x="595" y="766" width="40" height="2"/><rect x="644" y="766" width="40" height="2"/><rect x="693" y="766" width="40" height="2"/></g>
<!-- VS -->
<path d="M407 743l3-2 6 4 8-9 7 3v18l-7 3-8-9-6 4-3-2zM411 745v6l3-3zM424 743l-5 5 5 5z" fill="#8a63c6" fill-rule="evenodd"/><path d="M424 736l7 3v18l-7 3z" fill="#b18be5"/>
<!-- SQL -->
<ellipse cx="465" cy="740" rx="6" ry="2.500" fill="#f5d54e"/><path d="M459 740v16c0 3 12 3 12 0v-16c0 3-12 3-12 0z" fill="#f2cf3f"/>
<path d="M472 737h6v5M478 756v3h-6M458 759h6M458 755v4" fill="none" stroke="#3aa14c" stroke-width="1.500"/>
<path d="M470 747l8 9M477 747l-8 9" stroke="#2f90d6" stroke-width="2"/>
<!-- VSCode -->
<path d="M524 737l6 3v16l-6 3-10-9-5 4-3-2v-8l3-2 5 4zM524 743l-6 5 6 5z" fill="#1f9cf0" fill-rule="evenodd"/><path d="M524 737l6 3v16l-6 3z" fill="#0f75bc"/>
<!-- stimulsoft -->
<rect x="555" y="736" width="12" height="22" fill="#1a9fe3"/><rect x="567" y="736" width="11" height="22" fill="#4a7fb8"/>
<path d="M564 736c8 4-1 12 3 22h-3c-5-8 2-16-3-22z" fill="#2d2d2d"/><path d="M572 739l4 10-5-9z" fill="#fff"/>
<!-- chrome -->
<circle cx="615" cy="748" r="11.500" fill="#e94235"/><path d="M615 748l-10 6a11.500 11.500 0 0 1 0-12z" fill="#34a853"/><path d="M606 754.500a11.500 11.500 0 0 1-4-6.500h13z" fill="#34a853"/><path d="M615 748h11.300a11.500 11.500 0 0 1-11 11.500z" fill="#fbbc04"/><circle cx="615" cy="748" r="5.500" fill="#fff"/><circle cx="615" cy="748" r="4.200" fill="#4285f4"/>
<!-- edge -->
<circle cx="664" cy="748" r="12" fill="#1a90d8"/><path d="M654 744c3-8 20-9 22 4 0 4-6 4-7 1-1-4-8-7-15-5z" fill="#46d36f"/><path d="M658 749c2-3 7-3 9 0-3-1-6 4-2 8 3 2 7 2 9 0-3 4-9 4-11 3-4-2-6-7-5-11z" fill="#0c5fa5"/>
<!-- bolt -->
<path d="M716 737l-8 12h5l-4 10 11-14h-6l5-8z" fill="#8f1d2e"/>

<!-- tray -->
<path d="M1027 750l6-6 6 6" fill="none" stroke="#ddd" stroke-width="1.300"/>
<rect x="1049" y="740" width="15" height="16" fill="#4aa3d6" stroke="#2a7cb0"/><path d="M1051 745h10M1051 749l8 5" stroke="#cfeaf7"/><path d="M1049 755h6l-6 1z" fill="#c4a24c"/>
<rect x="1075" y="743" width="14" height="10" fill="#111" stroke="#fff"/><rect x="1073" y="741" width="6" height="5" fill="#fff"/><path d="M1082 753v3M1079 756.500h6" stroke="#fff"/>
<rect x="1097" y="740" width="16" height="16" fill="#ee4035"/><path d="M1102 748l3-3 3 3-3 3zM1106 748l2.500-2.500 2.500 2.500-2.500 2.500z" fill="#fff"/>
<path d="M1122 752c0-6 5-10 10-9-3 2-4 5-2 7 3 2 5 1 6 0-2 3-9 6-14 2z" fill="#4fae4a"/><circle cx="1131" cy="745" r="4.500" fill="#2a6fd0"/><path d="M1122 749l4 5 3 1-7-1z" fill="#e8a820"/>
<rect x="1146" y="742" width="14" height="11" fill="none" stroke="#fff"/><rect x="1145" y="741" width="5" height="5" fill="#1b1b1b" stroke="#fff"/><path d="M1153 753v3M1149 756.500h8" stroke="#fff"/>
<path d="M1177 740l6 2.500v6c0 4-3 6-6 7.500-3-1.500-6-3.500-6-7.500v-6z" fill="#fff"/><path d="M1177 740v16M1171 748h12" stroke="#1b1b1b"/><path d="M1181 747l5 9h-10z" fill="#f9c812"/>
<path d="M1194 746h2l4-3.500v11l-4-3.500h-2zM1202 745c2 2 2 4 0 6M1205 743c2.500 3 2.500 7 0 10M1208 741.500c3.500 4 3.500 9 0 13" fill="none" stroke="#ddd"/>
<text x="1219" y="753" fill="#e6e6e6" textLength="23" lengthAdjust="spacingAndGlyphs">ENG</text>
<text x="1257" y="743" fill="#e6e6e6" textLength="48" lengthAdjust="spacingAndGlyphs">10:44 AM</text>
<text x="1260" y="762" fill="#e6e6e6" textLength="44" lengthAdjust="spacingAndGlyphs">6/7/2022</text>
<path d="M1325 740h16v12h-9l-3 3v-3h-4z" fill="#fff"/><path d="M1327 743.500h12M1327 746h12M1327 748.500h7" stroke="#222"/>
<circle cx="1340.500" cy="755" r="7.500" fill="#333" stroke="#888"/>
<text x="1340.500" y="759" fill="#fff" font-size="10.500" font-weight="bold" text-anchor="middle">3</text>
<rect x="1361" y="728" width="1" height="40" fill="#555"/>
</svg>
</body></html>
